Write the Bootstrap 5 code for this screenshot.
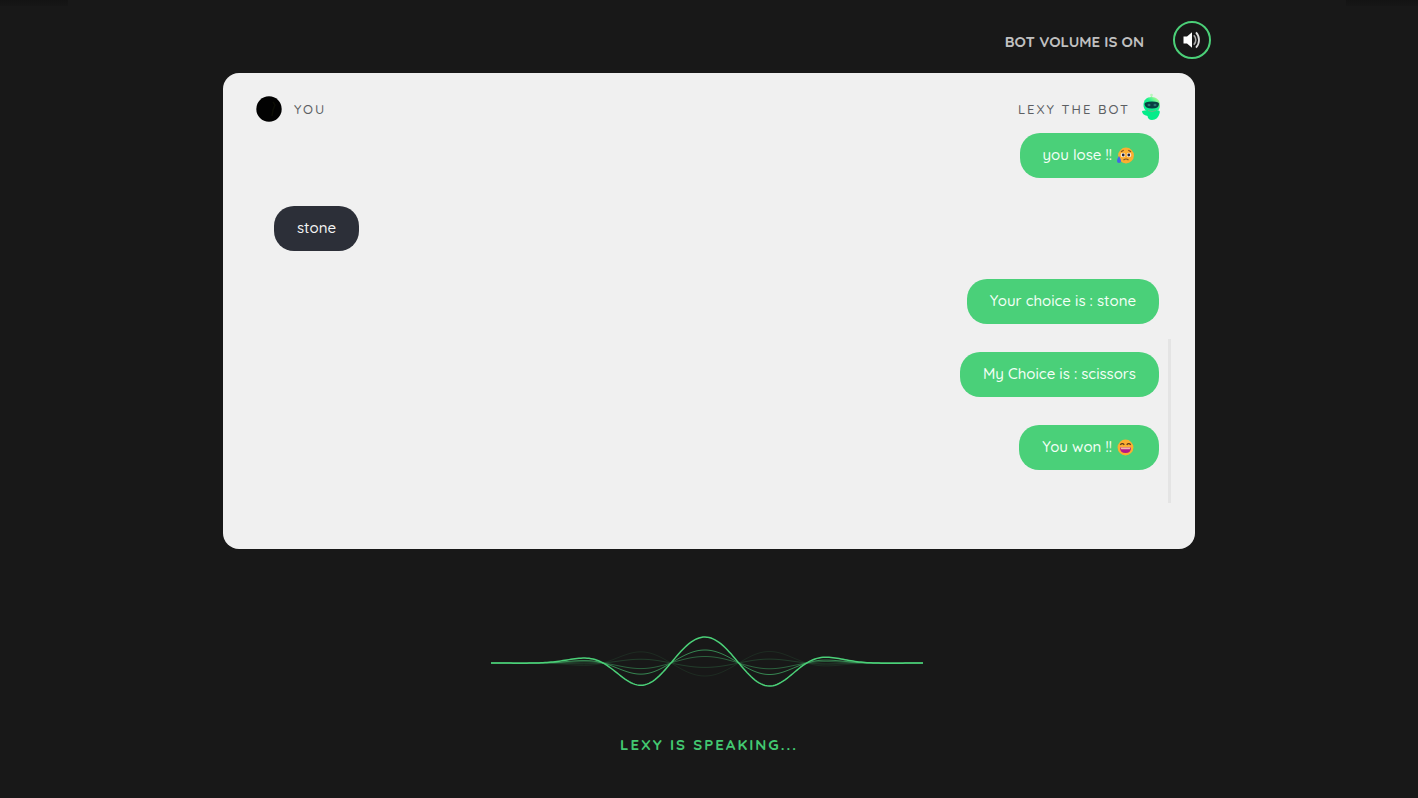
<!DOCTYPE html>
<html lang="en">
<head>
<meta charset="utf-8">
<meta name="viewport" content="width=device-width, initial-scale=1">
<title>Lexy the Bot</title>
<link href="https://cdn.jsdelivr.net/npm/bootstrap@5.3.0/dist/css/bootstrap.min.css" rel="stylesheet">
<style>
  body { background: #181818; font-family: Quicksand, Lato, sans-serif; font-size: 15px; font-weight: 500; line-height: 24px; min-height: 100vh; }
  .corner { width: 68px; height: 6px; background: linear-gradient(#131313, #161616); }
  .corner-end { width: 72px; }
  .chat-shell { max-width: 1004px; padding-top: 21px; }
  .volume-row { gap: 29px; margin-bottom: 14px; }
  .volume-label { color: #c0c0c0; font-weight: 700; padding-top: 3px; }
  .volume-btn { width: 38px; height: 38px; border: 2px solid #4bd078; background: #181818; }
  .chat-panel { background: #f0f0f0; border-radius: 16px; padding: 20px 24px 46px 33px; }
  .chat-head { height: 32px; padding-right: 7px; }
  .who { color: #5c5f63; font-size: 13px; letter-spacing: 2px; line-height: 16px; }
  .avatar { width: 26px; height: 26px; }
  .bot-avatar { width: 26px; height: 28px; }
  .chat-log { padding: 8px 12px 33px 18px; gap: 28px; }
  .bubble { min-height: 45px; border-radius: 20px; padding: 10px 23px; color: #f3fff6; background: #4ad079; }
  .bubble-user { background: #2c2f38; color: #f4f4f4; }
  .emoji { width: 17px; height: 17px; margin: 0 2px 2px 1px; }
  .scroll-thumb { width: 3px; height: 164px; background: #e4e4e4; right: 0; bottom: 0; }
  .wave-area { padding-top: 78px; }
  .wave-area svg { width: 436px; max-width: 100%; }
  .status { color: #43c871; font-weight: 700; letter-spacing: 2px; margin-top: 36px; }
</style>
</head>
<body class="position-relative">
<div class="corner position-absolute top-0 start-0"></div>
<div class="corner corner-end position-absolute top-0 end-0"></div>

<main class="chat-shell container-fluid px-0">
  <div class="volume-row d-flex justify-content-end align-items-center">
    <label class="volume-label" for="volume">BOT VOLUME IS ON</label>
    <button id="volume" type="button" class="volume-btn btn rounded-circle p-0 d-flex align-items-center justify-content-center">
      <svg width="18" height="18" viewBox="0 0 18 18" fill="none" aria-hidden="true">
        <path d="M.5 5.600h3.500L9 1.200v15.600l-5-4.400H.5z" fill="#fff"/>
        <path d="M10.800 4.200q2 2 2 4.800t-2 4.800" stroke="#aaa" stroke-width="1.600"/>
        <path d="M13 1.300Q16 4.600 16 9t-3 7.700" stroke="#ddd" stroke-width="1.800"/>
      </svg>
    </button>
  </div>

  <section class="chat-panel mx-3">
    <header class="chat-head d-flex justify-content-between align-items-center">
      <div class="d-flex align-items-center">
        <svg class="avatar" viewBox="0 0 26 26" aria-hidden="true">
          <circle cx="13" cy="13" r="12.700" fill="#020202"/>
          <path d="M17 6l2 3-2 5-1 6" fill="none" stroke="#0c0d05" stroke-width="1.500"/>
        </svg>
        <span class="who ms-2 ps-1">YOU</span>
      </div>
      <div class="d-flex align-items-center pb-1">
        <span class="who me-2 pt-1">LEXY THE BOT</span>
        <svg class="bot-avatar" viewBox="0 0 26 28" aria-hidden="true">
          <defs>
            <linearGradient id="skin" x1="0" y1="1" x2="1" y2="0">
              <stop offset="0" stop-color="#00e88d"/><stop offset=".55" stop-color="#1bf28d"/><stop offset="1" stop-color="#e8fa9a"/>
            </linearGradient>
          </defs>
          <path d="M13.500 1v4" stroke="#a6f5b4" stroke-width="1.400"/>
          <circle cx="13.500" cy="2" r="1.300" fill="#b9f7bc"/>
          <path d="M5.500 12c0-5 3-8 8-8s8.500 3 8.500 8-3 7-8 7-8.500-2-8.500-7z" fill="url(#skin)"/>
          <path d="M4 18q4-1 7-.5l10 0q1.500 1 .5 3-1.500 6-7.500 6.500-4 0-4.500-4-5.500-1-5.500-5z" fill="#05ec8a"/>
          <path d="M10 17.500q4 2 8 0" stroke="#69bd88" fill="none"/>
          <path d="M6.500 11q0-2.500 7.500-2.500t7 2.500q0 4.500-7 4.500t-7.500-4.500z" fill="#093f43"/>
          <ellipse cx="11" cy="12" rx="1.500" ry="1.200" fill="#27786f"/><ellipse cx="17" cy="12" rx="1.500" ry="1.200" fill="#27786f"/>
        </svg>
      </div>
    </header>

    <div class="chat-log position-relative d-flex flex-column">
      <div class="bubble align-self-end">you lose !!
        <svg class="emoji" viewBox="0 0 17 17" role="img" aria-label="sad but relieved face">
          <circle cx="9" cy="8.500" r="7.900" fill="#fcae31"/>
          <path d="M4 4.800l2.700-1.500M11.300 3.300L14 4.800M6.500 13q2.500-2 5 0" stroke="#805020" stroke-width="1.200" fill="none"/>
          <circle cx="6" cy="8" r="2.300" fill="#fff4df"/><circle cx="12" cy="8" r="2.300" fill="#fff4df"/>
          <circle cx="6.200" cy="8" r="1.400" fill="#24213d"/><circle cx="11.800" cy="8" r="1.400" fill="#24213d"/>
          <path d="M2 9q-2 3-2 5t2 2 2-2-2-5z" fill="#4664e6"/>
        </svg>
      </div>
      <div class="bubble bubble-user align-self-start">stone</div>
      <div class="bubble align-self-end">Your choice is : stone</div>
      <div class="bubble align-self-end">My Choice is : scissors</div>
      <div class="bubble align-self-end">You won !!
        <svg class="emoji" viewBox="0 0 17 17" role="img" aria-label="laughing face">
          <circle cx="8.500" cy="8.500" r="7.900" fill="#fcae31"/>
          <path d="M3.300 5.800q2-2.200 4 0M9.700 5.800q2-2.200 4 0" stroke="#5b381c" stroke-width="1.300" fill="none"/>
          <path d="M3 8.500h11q0 5.500-5.500 5.500T3 8.500z" fill="#b51888"/>
          <path d="M3.500 8.500h10l-.7 1.700H4.200z" fill="#f0b6a6"/>
        </svg>
      </div>
      <div class="scroll-thumb position-absolute"></div>
    </div>
  </section>
</main>

<section class="wave-area text-center">
  <svg id="wave" class="d-block mx-auto" viewBox="0 0 436 70" fill="none" stroke="#4bd078" aria-hidden="true"></svg>
  <p class="status mb-0">LEXY IS SPEAKING...</p>
</section>

<script src="https://cdn.jsdelivr.net/npm/bootstrap@5.3.0/dist/js/bootstrap.bundle.min.js"></script>
<script>
  // Damped sine curves: [amplitude, opacity, line width]
  const curves = [[-13, .1, 1], [-4.4, .2, 1], [6.5, .4, 1], [13, .6, 1], [26, 1, 1.5]];
  const wave = document.getElementById('wave');
  for (const [amplitude, opacity, width] of curves) {
    let d = '';
    for (let px = -216; px <= 216; px += 2) {
      const x = px / 108;
      const y = 36 - amplitude * Math.pow(4 / (4 + x ** 4), 4) * Math.cos(5 * x + .1);
      d += (d ? 'L' : 'M') + (px + 216) + ' ' + y.toFixed(2);
    }
    const path = document.createElementNS('http://www.w3.org/2000/svg', 'path');
    path.setAttribute('d', d);
    path.setAttribute('stroke-opacity', opacity);
    path.setAttribute('stroke-width', width);
    wave.append(path);
  }
</script>
</body>
</html>
